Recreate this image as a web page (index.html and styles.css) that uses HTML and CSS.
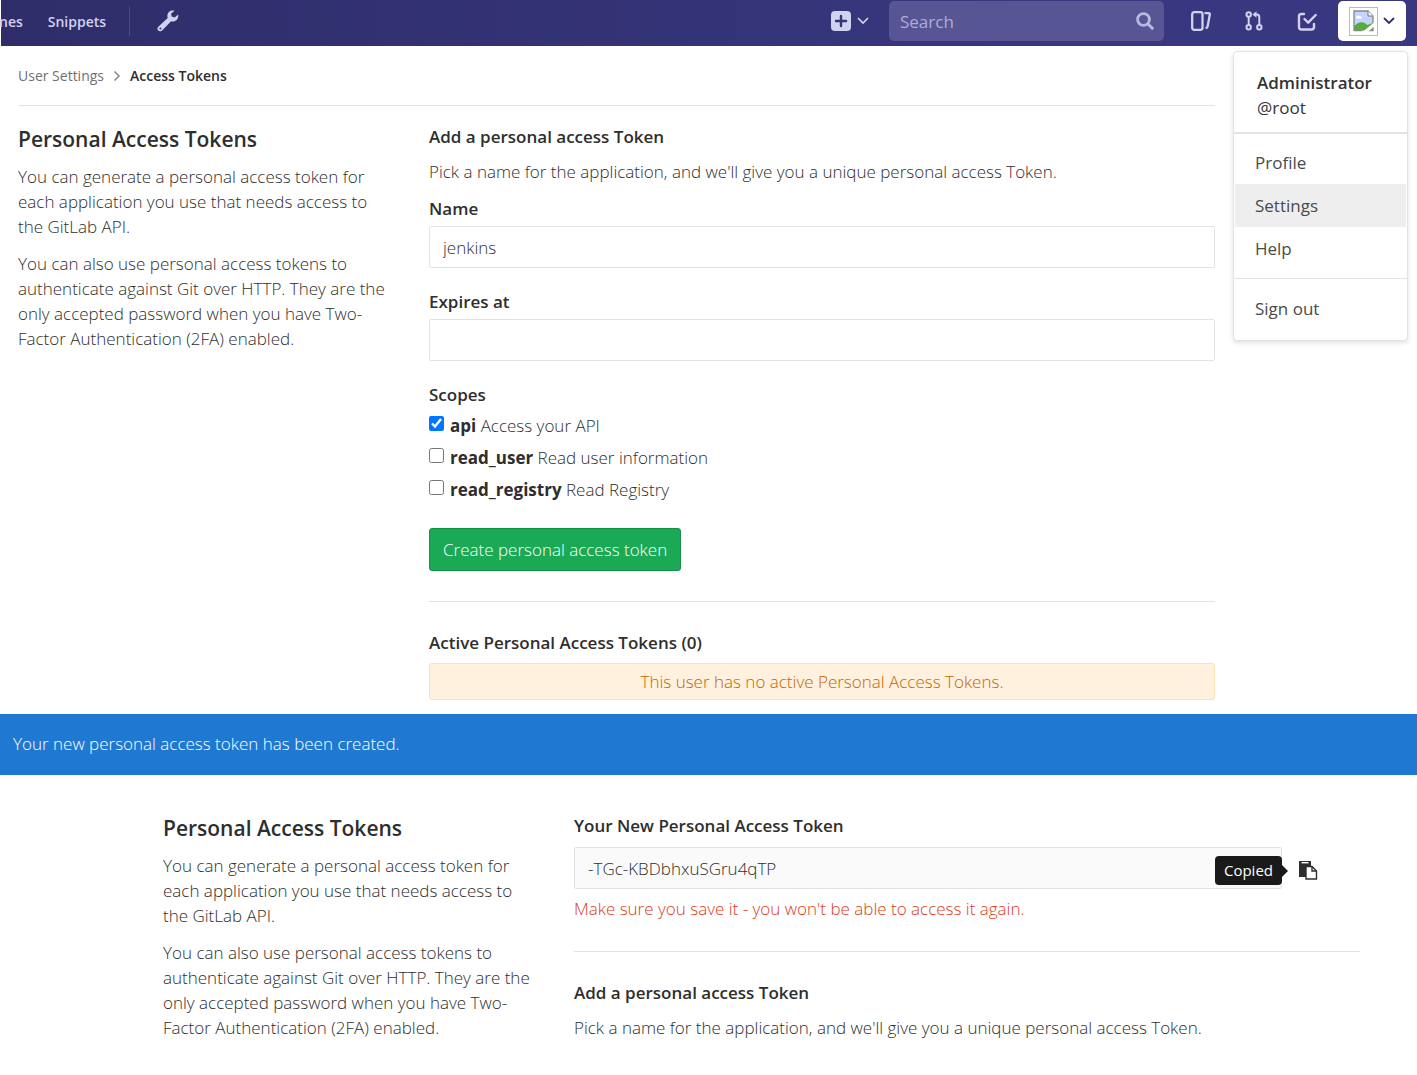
FILE: index.html
```html
<!DOCTYPE html>
<html lang="en">
<head>
<meta charset="utf-8">
<title>Access Tokens · User Settings</title>
<link rel="stylesheet" href="styles.css">
</head>
<body>
<header class="navbar">
  <nav class="nav-left">
    <a href="#">nes</a>
    <a href="#">Snippets</a>
    <a href="#" class="nav-admin" aria-label="Admin area">
      <svg width="22" height="22" viewBox="0 0 22 22"><path d="M21.2 4.6 17.6 7.4 14.600 6.400 14.200 3.500 17.600 .8C14.500-.4 10.600 1.700 10.400 5.500c-.1 1 .1 1.700.3 2.400L1.300 16.800c-1.200 1.100-1.200 2.800-.1 3.800s2.800 1 3.900-.1l9-9.200c4 1.300 7.900-2.100 7.100-6.700z" fill="currentColor"/><circle cx="3.400" cy="18.500" r="1" fill="#302f6c"/></svg>
    </a>
  </nav>
  <div class="nav-right">
    <button class="nav-new" aria-label="New">
      <svg width="20" height="20" viewBox="0 0 20 20"><rect width="20" height="20" rx="4" fill="currentColor"/><path d="M10 5v10M5 10h10" stroke="#363578" stroke-width="2.400" stroke-linecap="round"/></svg>
      <svg width="12" height="8" viewBox="0 0 12 8"><path d="m1.500 1.500 4.500 4.500 4.500-4.500" fill="none" stroke="currentColor" stroke-width="1.700" stroke-linecap="round"/></svg>
    </button>
    <form class="search">
      <input type="search" placeholder="Search" aria-label="Search">
      <svg width="18" height="18" viewBox="0 0 18 18"><circle cx="7.500" cy="7.500" r="5.900" fill="none" stroke="currentColor" stroke-width="2.800"/><path d="m12 12 4.300 4.300" stroke="currentColor" stroke-width="3" stroke-linecap="round"/></svg>
    </form>
    <div class="nav-icons">
      <a href="#" aria-label="Issues"><svg width="20" height="20" viewBox="0 0 20 20" fill="none" stroke="currentColor" stroke-width="2.300"><rect x="1.200" y="1.200" width="10.300" height="17.600" rx="2"/><path d="M13.500 2.200h4.200c1 0 1.300.6 1.100 1.400l-2.200 11.900c-.2 1-.9 1.500-2 1.700"/></svg></a>
      <a href="#" aria-label="Merge requests"><svg width="18" height="20" viewBox="0 0 18 20" fill="none" stroke="currentColor" stroke-width="2"><circle cx="3.700" cy="3.500" r="2.200"/><circle cx="3.700" cy="16.300" r="2.200"/><circle cx="14.300" cy="16.300" r="2.200"/><path d="M3.700 6v8M14.300 14V6c0-1.700-.8-2.500-2.300-2.500h-2"/><path d="M11.500.3v6.400L7.400 3.500z" fill="currentColor" stroke="none"/></svg></a>
      <a href="#" aria-label="To-do list"><svg width="20" height="20" viewBox="0 0 20 20" fill="none" stroke="currentColor" stroke-width="2.400" stroke-linecap="round" stroke-linejoin="round"><path d="M7 3H4.500C2.600 3 2 3.700 2 5.500V16c0 1.700.6 2.500 2.500 2.500h10c1.900 0 2.500-.8 2.500-2.500v-3M7.500 8l3.700 3.700L18.700 4"/></svg></a>
    </div>
    <div class="user">
      <button class="user-toggle" aria-label="Administrator">
        <span class="avatar"><svg width="22" height="22" viewBox="0 0 22 22"><path d="M1 1h14l5 5v15H1z" fill="#c3d5fa"/><path d="M3 7.500c0-2 2.300-2.800 3.200-1.300 1.800-.4 2.800.8 2.800 2.300H3z" fill="#fff"/><path d="M1 20.500v-4C5 11 11 11 14 15l6-2v7.500z" fill="#57ab38"/><path d="M1 21V1h14l5 5v8M1 20.500h8M15 20.500h5V17" fill="none" stroke="#888" stroke-width="1.300"/><path d="M15 1v5h5" fill="#fff" stroke="#777"/><path d="m9.500 22 12-10v4L15 22z" fill="#fff"/></svg></span>
        <svg width="12" height="8" viewBox="0 0 12 8"><path d="m1.500 1.500 4.500 4.500 4.500-4.500" fill="none" stroke="currentColor" stroke-width="1.800" stroke-linecap="round"/></svg>
      </button>
      <div class="menu">
        <div class="menu-user"><strong>Administrator</strong><span>@root</span></div>
        <div class="menu-group">
          <a href="#">Profile</a>
          <a href="#" class="active">Settings</a>
          <a href="#">Help</a>
        </div>
        <div class="menu-group"><a href="#">Sign out</a></div>
      </div>
    </div>
  </div>
</header>

<main class="settings">
  <nav class="breadcrumb" aria-label="Breadcrumb">
    <a href="#">User Settings</a>
    <svg width="8" height="12" viewBox="0 0 8 12"><path d="m1.500 1.500 4.500 4.500-4.500 4.500" fill="none" stroke="#888" stroke-width="1.500"/></svg>
    <strong>Access Tokens</strong>
  </nav>
  <div class="row">
    <section class="intro">
      <h1>Personal Access Tokens</h1>
      <p>You can generate a personal access token for each application you use that needs access to the GitLab API.</p>
      <p>You can also use personal access tokens to authenticate against Git over HTTP. They are the only accepted password when you have Two-Factor Authentication (2FA) enabled.</p>
    </section>
    <section class="panel">
      <h2>Add a personal access Token</h2>
      <p>Pick a name for the application, and we'll give you a unique personal access Token.</p>
      <form>
        <div class="field">
          <label for="name">Name</label>
          <input type="text" id="name" class="control" value="jenkins">
        </div>
        <div class="field">
          <label for="expires">Expires at</label>
          <input type="text" id="expires" class="control">
        </div>
        <fieldset class="scopes">
          <legend>Scopes</legend>
          <label><input type="checkbox" checked><span><b>api</b> Access your API</span></label>
          <label><input type="checkbox"><span><b>read_user</b> Read user information</span></label>
          <label><input type="checkbox"><span><b>read_registry</b> Read Registry</span></label>
        </fieldset>
        <button type="submit" class="create">Create personal access token</button>
      </form>
      <hr>
      <h2 class="active-title">Active Personal Access Tokens (0)</h2>
      <div class="notice">This user has no active Personal Access Tokens.</div>
    </section>
  </div>
</main>

<div class="flash" role="status">Your new personal access token has been created.</div>

<div class="created">
  <div class="row">
    <section class="intro">
      <h1>Personal Access Tokens</h1>
      <p>You can generate a personal access token for each application you use that needs access to the GitLab API.</p>
      <p>You can also use personal access tokens to authenticate against Git over HTTP. They are the only accepted password when you have Two-Factor Authentication (2FA) enabled.</p>
    </section>
    <section class="panel">
      <h2 class="token-title"><label for="token">Your New Personal Access Token</label></h2>
      <div class="token">
        <input type="text" id="token" class="control" value="-TGc-KBDbhxuSGru4qTP" readonly>
        <div class="copy">
          <button aria-label="Copy token"><svg width="20" height="20" viewBox="0 0 20 20"><path d="M1 1h12v6H8v10H1z" fill="#2e2e2e"/><path d="M3.500 2.700h7" stroke="#fff" stroke-width="1.400"/><path d="M8 6.500h6l4.500 4.500v8H8z" fill="#fff" stroke="#2e2e2e" stroke-width="1.400"/><path d="M14 6.500V11h4.500" fill="none" stroke="#2e2e2e" stroke-width="1.400"/></svg></button>
          <span class="tooltip" role="tooltip">Copied</span>
        </div>
      </div>
      <p class="warning">Make sure you save it - you won't be able to access it again.</p>
      <hr>
      <h2>Add a personal access Token</h2>
      <p>Pick a name for the application, and we'll give you a unique personal access Token.</p>
    </section>
  </div>
</div>
</body>
</html>
```
FILE: styles.css
```css
* { box-sizing: border-box; }

body {
  margin: 0;
  background: #fff;
  color: #2e2e2e;
  font: 340 17px/25px "Open Sans", "Noto Sans", sans-serif;
}

a { color: inherit; text-decoration: none; }
h1, h2, p { margin: 0; }
h1, h2, strong, label, legend { font-weight: 550; }
b { font-weight: 700; }
input, button { font: inherit; color: inherit; }
button { border: 0; padding: 0; background: none; cursor: pointer; }
svg { display: block; flex: none; }

.navbar {
  display: flex;
  justify-content: space-between;
  height: 46px;
  padding: 1px 11px 5px 0;
  border-left: 1px solid #fff;
  background: linear-gradient(90deg, #2f2d69, #38377f 75%);
  color: #d1d1f0;
}
.nav-left, .nav-right, .nav-icons, .nav-new { display: flex; align-items: center; }
.nav-left { gap: 25px; margin-left: -2px; font-size: 14px; font-weight: 600; }
.nav-admin {
  display: flex;
  align-items: center;
  height: 30px;
  margin-left: -2px;
  padding-left: 27px;
  border-left: 1px solid #4c4a85;
}
.nav-new { gap: 6px; margin-right: 20px; }
.search {
  display: flex;
  align-items: center;
  width: 275px;
  height: 40px;
  padding: 0 10px;
  border-radius: 5px;
  background: #575593;
  color: #b9b8e0;
}
.search input {
  flex: 1;
  min-width: 0;
  padding: 0 1px;
  border: 0;
  background: none;
  font-size: 17px;
  font-weight: 400;
}
.search input::placeholder { color: #aeadd6; opacity: 1; }
.nav-icons { gap: 34px; margin: 0 21px 0 27px; }

.user { position: relative; }
.user-toggle {
  display: flex;
  align-items: center;
  gap: 5px;
  width: 68px;
  height: 40px;
  padding: 0 11px;
  border-radius: 5px;
  background: #fff;
  color: #2f2d69;
}
.avatar {
  display: grid;
  place-items: center;
  width: 29px;
  height: 29px;
  border: 1px solid #bbb;
}
.menu {
  position: absolute;
  z-index: 1;
  top: 50px;
  right: -2px;
  width: 175px;
  border: 1px solid #e3e3e3;
  border-radius: 4px;
  background: #fff;
  color: #4a4a4a;
  font-weight: 400;
  box-shadow: 0 2px 5px rgba(0, 0, 0, .12);
}
.menu-user { display: grid; padding: 18px 23px 12px; color: #333; }
.menu-user + .menu-group { border-top: 2px solid #e3e3e3; }
.menu-group { padding: 7px 1px 8px; border-top: 1px solid #e3e3e3; }
.menu-group:last-child { padding: 8px 1px 10px; }
.menu-group a { display: block; padding: 9px 20px; }
.menu-group .active { background: #eee; }

.settings { padding: 0 202px 14px 18px; }
.breadcrumb {
  display: flex;
  align-items: center;
  gap: 9px;
  height: 60px;
  border-bottom: 1px solid #e3e3e3;
  font-size: 14px;
  font-weight: 400;
}
.breadcrumb a { color: #707070; }

.row {
  display: grid;
  grid-template-columns: repeat(12, minmax(0, 1fr));
  column-gap: 36px;
  padding-top: 18px;
}
.intro { grid-column: span 4; }
.panel { grid-column: span 8; }
.intro h1 { margin-bottom: 10px; font-size: 21px; line-height: 30px; }
.intro p { margin-bottom: 12px; }
.panel h2 { margin-bottom: 10px; font-size: 17px; line-height: 25px; }
.panel p { margin-bottom: 12px; }

.field { margin-bottom: 21px; }
.field label { display: block; margin-bottom: 5px; }
.control {
  display: block;
  width: 100%;
  height: 42px;
  padding: 0 13px;
  border: 1px solid #e3e3e3;
  border-radius: 2px;
  background: #fff;
}
.scopes {
  display: grid;
  gap: 7px;
  margin: 0 0 26px;
  padding: 0;
  border: 0;
}
.scopes legend { margin-bottom: 6px; padding: 0; }
.scopes label { display: flex; gap: 6px; font-weight: inherit; }
.scopes input { width: 15px; height: 15px; margin: 3px 0 0; accent-color: #0075ff; }
.create {
  height: 43px;
  padding: 0 13px;
  border: 1px solid #168f48;
  border-radius: 3px;
  background: #1aaa55;
  color: #fff;
}
hr { margin: 30px 0 28px; border: 0; border-top: 1px solid #e3e3e3; }
.panel .active-title { margin-bottom: 8px; }
.panel .token-title { margin-bottom: 9px; }
.notice {
  padding: 5px;
  border: 1px solid #fde0b5;
  border-radius: 3px;
  background: #fff1de;
  color: #c26700;
  text-align: center;
}

.flash { padding: 17px 13px 19px; background: #1f78d1; color: #fff; }

.created { padding: 20px 57px 34px 163px; }
.token { display: flex; align-items: center; margin-bottom: 7px; }
.token .control { flex: 1; background: #fafafa; }
.copy { position: relative; width: 78px; padding: 9px 0 0 16px; }
.tooltip {
  position: absolute;
  top: 5px;
  right: 100%;
  padding: 2px 9px;
  border-radius: 4px;
  background: #1a1a1a;
  color: #fff;
  font-size: 15px;
  font-weight: 400;
}
.tooltip::after {
  content: "";
  position: absolute;
  top: 9px;
  left: 100%;
  border: 6px solid transparent;
  border-left-color: #1a1a1a;
  border-right: 0;
}
.panel .warning { color: #db3b21; }
```
